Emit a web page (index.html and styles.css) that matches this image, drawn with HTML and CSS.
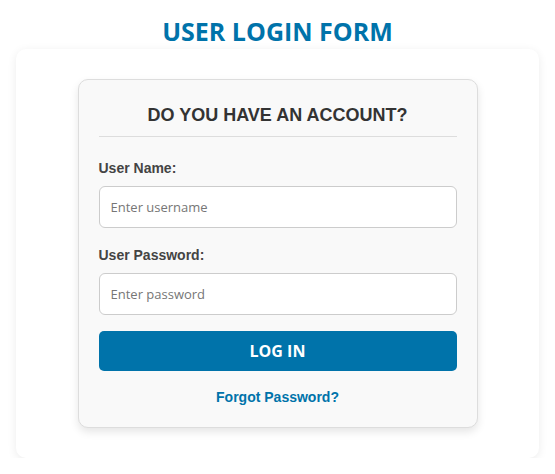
FILE: index.html
```html
<!DOCTYPE html>
<html lang="en">
<head>
<meta charset="utf-8">
<title>User Login Form</title>
<link rel="stylesheet" href="styles.css">
</head>
<body>
  <h1 class="page-title">USER LOGIN FORM</h1>
  <main class="outer-card">
    <form class="login-card">
      <h2 class="login-heading">DO YOU HAVE AN ACCOUNT?</h2>
      <div class="field">
        <label class="field-label" for="username">User Name:</label>
        <input class="field-input" id="username" type="text" placeholder="Enter username">
      </div>
      <div class="field">
        <label class="field-label" for="password">User Password:</label>
        <input class="field-input" id="password" type="password" placeholder="Enter password">
      </div>
      <button class="login-button" type="button">LOG IN</button>
      <a class="forgot-link" href="#">Forgot Password?</a>
    </form>
  </main>
</body>
</html>
```
FILE: styles.css
```css
* { box-sizing: border-box; }
html, body { background: #ffffff; }
body {
  margin: 0;
  padding: 0 16px;
  font-family: "Liberation Sans", Arial, sans-serif;
}
.page-title {
  margin: 0;
  padding-top: 13px;
  height: 49px;
  text-align: center;
  font-family: "Open Sans", "Noto Sans", sans-serif;
  font-weight: 700;
  font-size: 25px;
  line-height: 36px;
  color: #0073aa;
}
.outer-card {
  background: #ffffff;
  border-radius: 10px;
  box-shadow: 0 2px 10px rgba(0, 0, 0, 0.08);
  padding: 30px 0;
  display: flex;
  justify-content: center;
}
.login-card {
  width: 400px;
  background: #f9f9f9;
  border: 1px solid #dddddd;
  border-radius: 10px;
  box-shadow: 0 4px 8px rgba(0, 0, 0, 0.1);
  padding: 20px 20px 22px;
  display: flex;
  flex-direction: column;
}
.login-heading {
  margin: 0 0 23px;
  padding: 5px 0 11px;
  border-bottom: 1px solid #dddddd;
  text-align: center;
  font-size: 18px;
  line-height: 20px;
  font-weight: 700;
  color: #333333;
}
.field {
  display: flex;
  flex-direction: column;
  gap: 10px;
  margin-bottom: 19px;
}
.field + .field { margin-bottom: 16px; }
.field-label {
  font-size: 14px;
  line-height: 16px;
  font-weight: 700;
  color: #444444;
}
.field-input {
  height: 42px;
  border: 1px solid #cccccc;
  border-radius: 6px;
  background: #ffffff;
  padding: 0 11px;
  font-family: "Open Sans", "Noto Sans", sans-serif;
  font-size: 13px;
  color: #333;
  outline: none;
}
.field-input::placeholder { color: #767676; }
.login-button {
  height: 40px;
  border: none;
  border-radius: 5px;
  background: #0073aa;
  color: #ffffff;
  font-family: "Open Sans", "Noto Sans", sans-serif;
  font-weight: 700;
  font-size: 16px;
  cursor: pointer;
}
.forgot-link {
  margin-top: 18px;
  text-align: center;
  font-size: 14px;
  line-height: 16px;
  font-weight: 700;
  color: #0073aa;
  text-decoration: none;
}
```
